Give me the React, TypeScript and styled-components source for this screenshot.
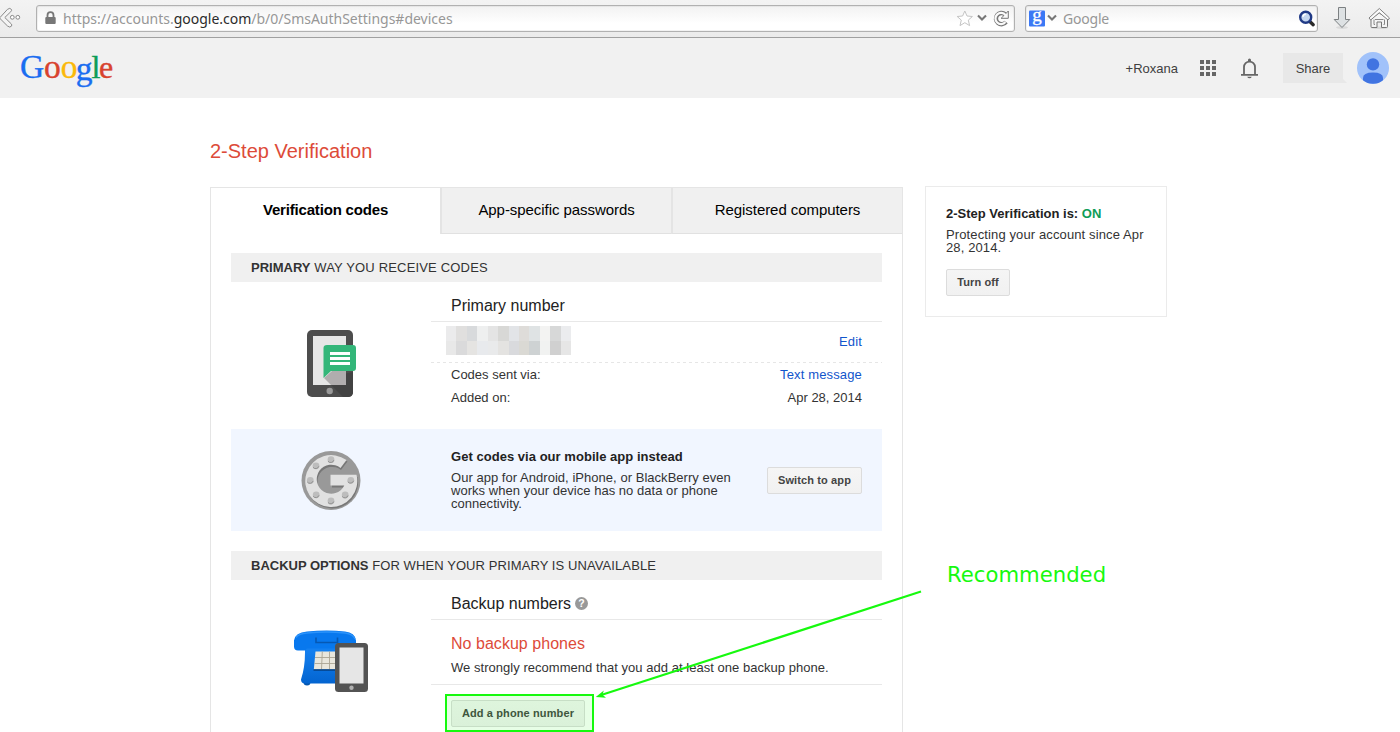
import React from "react";
import styled, { createGlobalStyle } from "styled-components";

const Global = createGlobalStyle`
  * { box-sizing: border-box; }
  body { margin: 0; background: #fff; overflow: hidden; }
`;

const Page = styled.div`
  position: relative;
  width: 1400px;
  height: 732px;
  overflow: hidden;
  background: #fff;
  font: 13px/13px "Liberation Sans", Arial, sans-serif;
  color: #333;
`;

const BrowserBar = styled.div`
  display: flex;
  align-items: flex-start;
  height: 38px;
  padding-top: 5px;
  background: linear-gradient(#f3f3f3, #ebebeb);
  border-bottom: 1px solid #a0a0a0;
`;
const Field = styled.div<{ $width: number; $gap: number }>`
  display: flex;
  align-items: center;
  flex: none;
  width: ${(p) => p.$width}px;
  height: 27px;
  margin-right: ${(p) => p.$gap}px;
  border: 1px solid #b1b1b1;
  border-radius: 3px;
  background: linear-gradient(#f2f2f2, #fff 70%);
  box-shadow: inset 0 0 0 1px rgba(0, 0, 0, 0.05);
`;
const FieldText = styled.span<{ $spacing: number }>`
  flex: 1;
  white-space: nowrap;
  color: #979797;
  font: 14px/25px "Noto Sans", "Open Sans", sans-serif;
  letter-spacing: ${(p) => p.$spacing}px;
  b { font-weight: 400; color: #2b2b2b; }
`;
const BarIcon = styled.svg<{ $ml?: number; $mr?: number }>`
  display: block;
  flex: none;
  overflow: visible;
  margin-left: ${(p) => p.$ml ?? 0}px;
  margin-right: ${(p) => p.$mr ?? 0}px;
`;

const Header = styled.header`
  display: flex;
  align-items: center;
  height: 60px;
  padding: 0 11px 0 16px;
  background: #f1f1f1;
`;
const Spacer = styled.div`
  flex: 1;
`;
const Profile = styled.span`
  color: #404040;
  margin-right: 22px;
`;
const Share = styled.div`
  position: relative;
  width: 60px;
  height: 30px;
  margin: 0 14px 0 25px;
  background: #e8e8e8;
  color: #404040;
  line-height: 31px;
  text-align: center;
  &::after {
    content: "";
    position: absolute;
    right: -4px;
    bottom: 0;
    border-left: 4px solid #e8e8e8;
    border-top: 4px solid transparent;
  }
`;

const Title = styled.h1`
  margin: 41px 0 0 210px;
  font-size: 20px;
  line-height: 24px;
  font-weight: 400;
  color: #dd4b39;
`;
const Columns = styled.div`
  display: flex;
  align-items: flex-start;
  gap: 22px;
  margin: 23px 0 0 210px;
`;
const Card = styled.section`
  width: 693px;
  height: 600px;
  margin-top: 1px;
  border: 1px solid #e5e5e5;
`;
const Tabs = styled.div`
  display: flex;
  height: 46px;
`;
const Tab = styled.div<{ $active?: boolean }>`
  flex: 1 1 0;
  font-size: 15px;
  line-height: 44px;
  letter-spacing: ${(p) => (p.$active ? -0.18 : -0.06)}px;
  text-align: center;
  color: #000;
  font-weight: ${(p) => (p.$active ? 700 : 400)};
  background: ${(p) => (p.$active ? "#fff" : "#f0f0f0")};
  border-bottom: 1px solid ${(p) => (p.$active ? "#fff" : "#e1e1e1")};
  border-left: ${(p) => (p.$active ? "0" : "2px solid #e4e4e4")};
`;
const SectionBar = styled.h2<{ $top: number; $spacing: number }>`
  height: 29px;
  margin: ${(p) => p.$top}px 20px 0;
  padding-left: 20px;
  background: #f0f0f0;
  font-size: 13px;
  font-weight: 400;
  line-height: 30px;
  letter-spacing: ${(p) => p.$spacing}px;
  color: #333;
  b { letter-spacing: 0; }
`;
const Block = styled.div`
  display: flex;
  margin: 0 20px;
`;
const Art = styled.div<{ $top: number; $left?: number }>`
  display: flex;
  justify-content: center;
  align-items: flex-start;
  width: 200px;
  padding-top: ${(p) => p.$top}px;
  padding-left: ${(p) => p.$left ?? 0}px;
`;
const Details = styled.div`
  width: 451px;
`;
const Subject = styled.h3`
  display: flex;
  align-items: center;
  gap: 4px;
  height: 40px;
  margin: 0;
  padding: 8px 20px 0;
  border-bottom: 1px solid #e8e8e8;
  font-size: 16px;
  line-height: 20px;
  font-weight: 400;
  color: #222;
`;
const NumberRow = styled.div`
  display: flex;
  justify-content: space-between;
  height: 41px;
  padding: 4px 20px 0 15px;
`;
const DashedLine = styled.div`
  height: 1px;
  margin-top: -1px;
  background: repeating-linear-gradient(90deg, #e6e6e6 0 3px, transparent 3px 6px);
`;
const Mosaic = styled.div`
  display: grid;
  grid-template-columns: repeat(12, 1fr);
  grid-template-rows: 15px 14px;
  width: 125px;
  height: 29px;
`;
const Tile = styled.i<{ $c: string }>`
  background: ${(p) => p.$c};
`;
const Link = styled.a<{ $top?: number; $spacing?: number }>`
  color: #15c;
  padding-top: ${(p) => p.$top ?? 0}px;
  letter-spacing: ${(p) => p.$spacing ?? 0}px;
`;
const Row = styled.div`
  display: flex;
  justify-content: space-between;
  height: 23px;
  padding: 0 20px;
  line-height: 24px;
`;
const Facts = styled.div`
  height: 66px;
`;
const Promo = styled.div`
  display: flex;
  height: 102px;
  margin: 0 20px;
  background: #f1f6ff;
`;
const PromoText = styled.div`
  width: 336px;
  padding: 21px 30px 0 20px;
  letter-spacing: 0.035px;
`;
const Strong = styled.div<{ $gap: number }>`
  font-weight: 700;
  color: #222;
  margin-bottom: ${(p) => p.$gap}px;
`;
const On = styled.span`
  color: #0f9d58;
`;
const Button = styled.button<{ $width: number; $top?: number }>`
  display: block;
  flex: none;
  width: ${(p) => p.$width}px;
  height: 27px;
  margin: ${(p) => p.$top ?? 0}px 0 0;
  padding: 0;
  border: 1px solid #dcdcdc;
  border-radius: 2px;
  background: linear-gradient(#f5f5f5, #f1f1f1);
  font: bold 11px/25px "Liberation Sans", Arial, sans-serif;
  letter-spacing: 0.12px;
  color: #444;
`;
const Warning = styled.div`
  height: 65px;
  padding: 14px 20px 0;
  border-bottom: 1px solid #e8e8e8;
  letter-spacing: 0.035px;
`;
const WarningTitle = styled.div`
  margin-bottom: 7px;
  font-size: 16px;
  line-height: 20px;
  color: #dd4b39;
`;
const Highlight = styled.div`
  width: 149px;
  height: 38px;
  margin: 9px 0 0 14px;
  padding: 4px;
  border: 2px solid #16f90e;
  position: relative;
  &::after {
    content: "";
    position: absolute;
    inset: 0;
    background: rgba(22, 249, 14, 0.1);
  }
`;
const Status = styled.aside`
  width: 242px;
  height: 131px;
  padding: 20px;
  border: 1px solid #ebebeb;
`;
const StatusText = styled.div`
  letter-spacing: 0.12px;
  white-space: nowrap;
`;
const Arrow = styled.svg`
  position: absolute;
  left: 590px;
  top: 585px;
`;
const Note = styled.div`
  position: absolute;
  left: 947px;
  top: 561px;
  font: 21.2px/28px "DejaVu Sans", sans-serif;
  color: #16f90e;
`;

const mosaicColors = [
  "#ebebec", "#e0dfde", "#d8dadc", "#eeefef", "#e4e4e4", "#d8d8d6",
  "#e2e4e7", "#dedcd9", "#dfe3e4", "#f3f3f2", "#d7d8d8", "#ebecee",
  "#e8e8e8", "#dadadb", "#e5e4e2", "#e8eaed", "#e9eaeb", "#e4e3e1",
  "#d9dadd", "#dad9d4", "#ced2d3", "#f1f2f1", "#d0d0d0", "#e6e6e6",
];

const BackIcon = () => (
  <BarIcon width="36" height="28" viewBox="0 5 36 28">
    <path d="M0 17.500 7.500 9.300q2.500-2 4 .2.500 1-.8 2.300L4.800 17.500l6.400 6.300q1 1 .3 2.300-1.500 2-4-.1L0 18.500z" fill="#f4f4f4" stroke="#8a8a8a" />
    <circle cx="12.300" cy="17.300" r="1.900" fill="#fff" stroke="#888" />
    <circle cx="17.800" cy="17.300" r="1.900" fill="#fff" stroke="#888" />
  </BarIcon>
);
const LockIcon = () => (
  <BarIcon $ml={8} $mr={7} width="11" height="13" viewBox="0 0.500 11 13">
    <path d="M2.500 6V3.700a3 3 0 0 1 6 0V6" fill="none" stroke="#777" strokeWidth="1.800" />
    <rect x="0.300" y="5.400" width="10.400" height="7" rx="1" fill="#777" />
  </BarIcon>
);
const StarIcon = () => (
  <BarIcon $mr={4} width="18" height="18" viewBox="0 0.500 18 18">
    <path d="m9.800 1.500 2.200 5 5.400.5-4.100 3.600 1.300 5.500-4.800-2.900L5 16.100l1.300-5.500L2.200 7l5.400-.5z" fill="#fff" stroke="#c4c4c4" strokeLinejoin="round" />
  </BarIcon>
);
const Chevron = ({ mr }: { mr: number }) => (
  <BarIcon $mr={mr} width="10" height="8" viewBox="0 1.200 10 8">
    <path d="m1 1.700 4 4 4-4" fill="none" stroke="#777" strokeWidth="2.100" />
  </BarIcon>
);
const ReloadIcon = () => (
  <BarIcon $mr={4} width="18" height="18" viewBox="-0.500 0.500 18 18">
    <path d="M13.500 12.500A5.600 5.600 0 1 1 12.600 4.800" fill="none" stroke="#777" strokeWidth="4.400" />
    <path d="M15.800 1.500v7.300H8.600l2.800-2.700z" fill="#fafafa" stroke="#777" />
    <path d="M12.900 12.500A5.600 5.600 0 1 1 13 5.600" fill="none" stroke="#fafafa" strokeWidth="2.200" />
  </BarIcon>
);
const EngineIcon = () => (
  <BarIcon $ml={3} $mr={2} width="16" height="16" viewBox="0 0.500 16 16">
    <rect width="16" height="16" rx="1" fill="#3b78f5" />
    <text x="8" y="10.800" textAnchor="middle" fontFamily="Liberation Serif, serif" fontSize="19" fill="#fff" stroke="#fff" strokeWidth=".3">g</text>
  </BarIcon>
);
const SearchIcon = () => (
  <BarIcon $mr={1} width="18" height="18" viewBox="0 0.500 18 18">
    <path d="m11.800 12 3.400 3.200" stroke="#2a2a2a" strokeWidth="3.400" strokeLinecap="round" />
    <circle cx="7.700" cy="7.800" r="5.500" fill="#c4d6ef" stroke="#203a86" strokeWidth="2.400" />
    <path d="M4.800 7.300a3.200 3.200 0 0 1 3-2.600" fill="none" stroke="#fff" strokeWidth="1.400" />
  </BarIcon>
);
const DownloadIcon = () => (
  <BarIcon $mr={16} width="20" height="26" viewBox="0 0 20 26">
    <ellipse cx="10" cy="22.500" rx="6" ry="1.400" fill="#dadada" />
    <path d="M6.500 2.500h7v12h4.300L10 22.500 2.200 14.500h4.300z" fill="#dde1e3" stroke="#7c8082" strokeLinejoin="round" />
  </BarIcon>
);
const HomeIcon = () => (
  <BarIcon width="24" height="26" viewBox="0.500 0 24 26">
    <ellipse cx="11.800" cy="22.800" rx="9" ry="1.200" fill="#d8d8d8" />
    <path d="M3.500 13.500v8q0 1 1 1h5v-5.500h4.500v5.500h5q1 0 1-1v-8L11.800 8z" fill="#f5f5f5" stroke="#777" />
    <path d="M6.500 14.500v5h1M17 14.500v5h-1M7.500 14.500h8.500" stroke="#888" fill="none" />
    <path d="m1.500 13 10.300-9.500L22 13l-1.500 2-8.700-7.300L3.200 15z" fill="#fafafa" stroke="#808080" strokeLinejoin="round" />
  </BarIcon>
);
const Logo = () => (
  <svg width="110" height="48" viewBox="16 44 110 48" fontFamily="Liberation Serif, serif" fontSize="33.500" strokeWidth=".4">
    <text y="78.300" x="20" fill="#1a6df0" stroke="#1a6df0">G</text>
    <text y="78.300" x="44" fill="#d8432e" stroke="#d8432e">o</text>
    <text y="78.300" x="60.800" fill="#fbb90a" stroke="#fbb90a">o</text>
    <text y="79.500" x="75.800" fill="#1a6df0" stroke="#1a6df0">g</text>
    <text y="77.800" x="91.500" fill="#0c9d57" stroke="#0c9d57" fontSize="32">l</text>
    <text y="78.300" x="98.900" fill="#d8432e" stroke="#d8432e" fontSize="32">e</text>
  </svg>
);
const AppsIcon = () => (
  <svg width="16" height="16" viewBox="0 0 16 16" fill="#666">
    {[0, 6, 12].map((y) => [0, 6, 12].map((x) => <rect key={`${x}-${y}`} x={x} y={y} width="4" height="4" />))}
  </svg>
);
const BellIcon = () => (
  <BarIcon $ml={25} width="17" height="20" viewBox="0 -0.500 17 20">
    <path d="M3 16V8.600a5.500 5.500 0 0 1 11 0V16" fill="none" stroke="#666" strokeWidth="1.800" />
    <path d="M0 15.500h17v1.800H0zM6.200 18.300h4.600q-.6 1.500-2.300 1.500t-2.300-1.500zM7 3V1.500a1.500 1.500 0 0 1 3 0V3z" fill="#666" />
  </BarIcon>
);
const Avatar = () => (
  <svg width="32" height="32" viewBox="0 0 32 32">
    <circle cx="16" cy="16" r="16" fill="#a1c2fa" />
    <circle cx="16" cy="12.400" r="6.200" fill="#4174e1" />
    <path d="M6 28.300V26q0-5.500 10-5.500T26 26v2.300A16 16 0 0 1 6 28.300z" fill="#4174e1" />
  </svg>
);
const MessagePhone = () => (
  <svg width="50" height="68" viewBox="0 0 50 68">
    <rect width="46" height="67" rx="5" fill="#4d4d4d" />
    <path d="M17 48 36 67h5q5 0 5-5V42z" fill="#424242" />
    <rect x="6" y="6" width="33" height="49" fill="#e6e6e6" />
    <path d="M17 48 24 55h15V41H25z" fill="#b0adae" />
    <path d="M20 15h26q3 0 3 3v20q0 3-3 3H24l-7.500 7V18q0-3 3.500-3z" fill="#33b679" />
    <path d="M23 22h20v3H23zM23 27h20v3H23zM23 32h20v3H23z" fill="#fff" />
    <circle cx="22.700" cy="61" r="3.200" fill="#999" />
  </svg>
);
const Authenticator = () => (
  <svg width="60" height="60" viewBox="0 -0.500 60 60">
    <circle cx="30" cy="30" r="29.500" fill="#999" />
    <path d="M45.500 9.500A26 26 0 1 0 55.500 25H30v10.500h13.200A14.500 14.500 0 1 1 39 18z" transform="translate(1 1.500)" fill="#777" />
    <path d="M45.500 9.500A26 26 0 1 0 55.500 24.300H29.500v10.700h13.800A14.500 14.500 0 1 1 39.500 17.500z" fill="#e1e1e1" />
    {[[30, 9.2], [15, 15.3], [9.3, 30], [15.2, 44.3], [30, 50.5], [44.2, 44.5], [49.8, 29.8]].map(([x, y]) => (
      <g key={`${x}-${y}`}>
        <circle cx={x} cy={y} r="3.400" fill="#bdbdbd" />
        <path d={`M${x - 3} ${y + 1.5}a3.300 3.300 0 0 0 5.800-1`} fill="none" stroke="#8c8c8c" strokeWidth=".9" />
      </g>
    ))}
  </svg>
);
const BackupPhones = () => (
  <svg width="76" height="64" viewBox="0 -0.500 76 64">
    <defs>
      <linearGradient id="blue" x1="0" y1="0" x2="0" y2="1">
        <stop offset="0" stopColor="#1684f5" />
        <stop offset="1" stopColor="#0364d0" />
      </linearGradient>
    </defs>
    <circle cx="14" cy="51.500" r="3.500" fill="#0757ae" />
    <path d="M12 14h46l2 39H12q-4 0-4-4 4-12 4-27z" fill="url(#blue)" />
    <path d="M1 10Q2 2 14 1q20-2 38 0 10 1 11 9v8H14l-2 2H5q-4 0-4-4z" fill="#0878ee" />
    <path d="M3 7Q6 3 14 2.500q20-2 38 0 8 1 10 6" fill="none" stroke="#2b93fb" strokeWidth="1.300" />
    <path d="M23 7v5h21.500V7" fill="none" stroke="#0658b3" strokeWidth="1.600" />
    <path d="M22.500 21h22v18H20.800z" fill="#e9e6dc" />
    <path d="M29.300 21l-.8 18M36.500 21v18M22 27H44M21.500 33H44" stroke="#aaa493" strokeWidth=".9" />
    <path d="M20.500 39.500h24" stroke="#063f80" strokeWidth="1.500" />
    <rect x="42" y="12.500" width="33" height="49" rx="3.500" fill="#535353" />
    <rect x="46.500" y="17" width="24" height="36" fill="#e6e6e6" />
    <circle cx="58.500" cy="57.300" r="2.200" fill="#b0b0b0" />
  </svg>
);
const HelpIcon = () => (
  <svg width="13" height="13" viewBox="0 0 13 13">
    <circle cx="6.500" cy="6.500" r="6.500" fill="#999" />
    <text x="6.500" y="10.200" textAnchor="middle" fontSize="10.500" fontWeight="700" fill="#fff">?</text>
  </svg>
);

export default function App() {
  return (
    <Page>
      <Global />
      <BrowserBar>
        <BackIcon />
        <Field $width={979} $gap={10}>
          <LockIcon />
          <FieldText $spacing={-0.01}>https://accounts.<b>google.com</b>/b/0/SmsAuthSettings#devices</FieldText>
          <StarIcon />
          <Chevron mr={5} />
          <ReloadIcon />
        </Field>
        <Field $width={293} $gap={14}>
          <EngineIcon />
          <Chevron mr={6} />
          <FieldText $spacing={-0.2}>Google</FieldText>
          <SearchIcon />
        </Field>
        <DownloadIcon />
        <HomeIcon />
      </BrowserBar>
      <Header>
        <Logo />
        <Spacer />
        <Profile>+Roxana</Profile>
        <AppsIcon />
        <BellIcon />
        <Share>Share</Share>
        <Avatar />
      </Header>
      <Title>2-Step Verification</Title>
      <Columns>
        <Card>
          <Tabs>
            <Tab $active>Verification codes</Tab>
            <Tab>App-specific passwords</Tab>
            <Tab>Registered computers</Tab>
          </Tabs>
          <SectionBar $top={19} $spacing={0.17}><b>PRIMARY</b> WAY YOU RECEIVE CODES</SectionBar>
          <Block>
            <Art $top={48} $left={1}><MessagePhone /></Art>
            <Details>
              <Subject>Primary number</Subject>
              <NumberRow>
                <Mosaic>{mosaicColors.map((c, i) => <Tile key={i} $c={c} />)}</Mosaic>
                <Link $top={9} $spacing={0.15}>Edit</Link>
              </NumberRow>
              <DashedLine />
              <Facts>
                <Row><span>Codes sent via:</span><Link $spacing={0.15}>Text message</Link></Row>
                <Row><span>Added on:</span><span>Apr 28, 2014</span></Row>
              </Facts>
            </Details>
          </Block>
          <Promo>
            <Art $top={21}><Authenticator /></Art>
            <PromoText>
              <Strong $gap={8}>Get codes via our mobile app instead</Strong>
              Our app for Android, iPhone, or BlackBerry even works when your device has no data or phone connectivity.
            </PromoText>
            <Button $width={95} $top={38}>Switch to app</Button>
          </Promo>
          <SectionBar $top={20} $spacing={0.09}><b>BACKUP OPTIONS</b> FOR WHEN YOUR PRIMARY IS UNAVAILABLE</SectionBar>
          <Block>
            <Art $top={50}><BackupPhones /></Art>
            <Details>
              <Subject>Backup numbers <HelpIcon /></Subject>
              <Warning>
                <WarningTitle>No backup phones</WarningTitle>
                We strongly recommend that you add at least one backup phone.
              </Warning>
              <Highlight><Button $width={134}>Add a phone number</Button></Highlight>
            </Details>
          </Block>
        </Card>
        <Status>
          <Strong $gap={8}>2-Step Verification is: <On>ON</On></Strong>
          <StatusText>Protecting your account since Apr<br />28, 2014.</StatusText>
          <Button $width={64} $top={15}>Turn off</Button>
        </Status>
      </Columns>
      <Arrow width="340" height="120" viewBox="590 585 340 120">
        <path d="M921 591.500 602 694.800" stroke="#16f90e" strokeWidth="2.200" fill="none" />
        <path d="m595.800 697 8-6.500-1.300 4.200 3.500 3z" fill="#16f90e" />
      </Arrow>
      <Note>Recommended</Note>
    </Page>
  );
}
